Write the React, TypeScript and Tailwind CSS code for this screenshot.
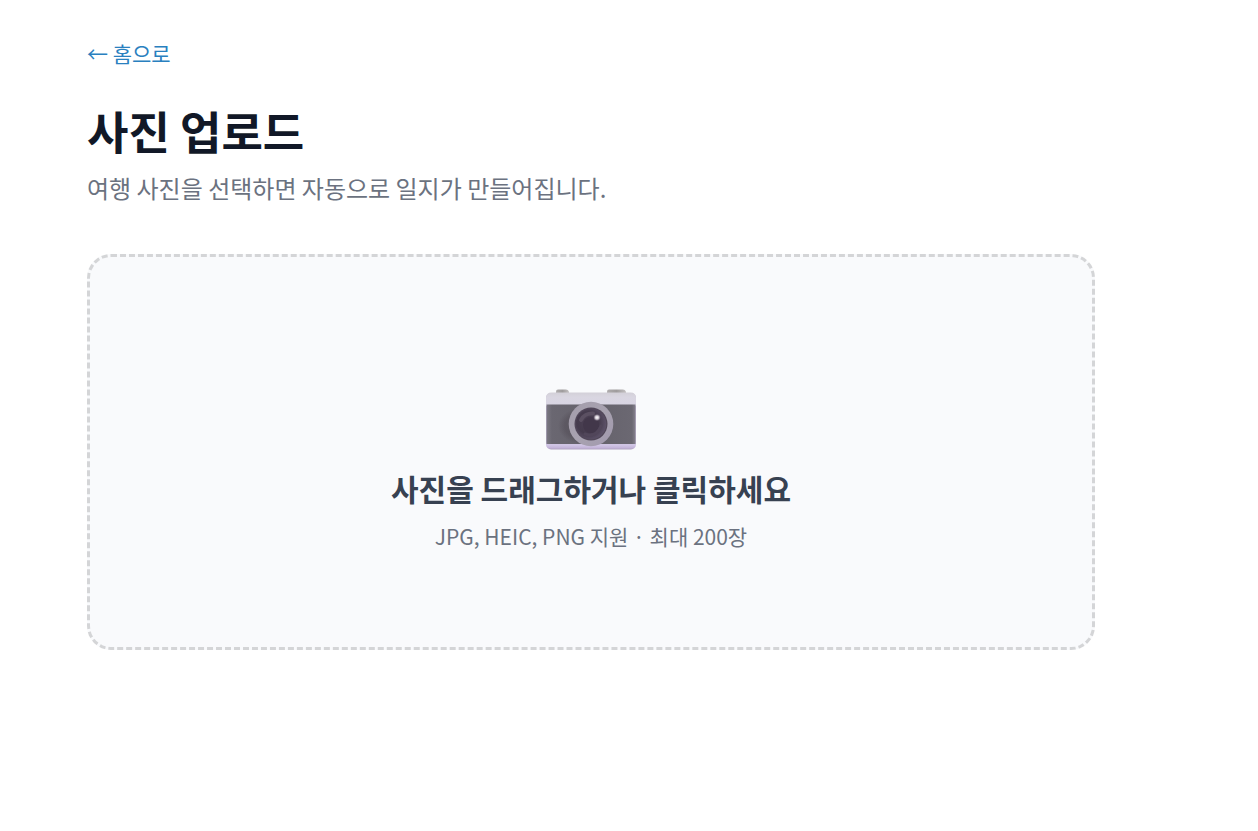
import { useRef } from 'react';

function CameraIcon() {
  return (
    <svg width="92" height="64" viewBox="0 0 92 64" aria-hidden="true">
      <defs>
        <linearGradient id="top" x1="0" y1="0" x2="0" y2="1">
          <stop offset="0" stopColor="#d3d0d8" />
          <stop offset="0.35" stopColor="#d9d6e1" />
          <stop offset="1" stopColor="#d8d4e3" />
        </linearGradient>
        <linearGradient id="base" x1="0" y1="55" x2="0" y2="63" gradientUnits="userSpaceOnUse">
          <stop offset="0" stopColor="#bfb3d0" />
          <stop offset="0.35" stopColor="#d2c7e6" />
          <stop offset="0.7" stopColor="#c4b5da" />
          <stop offset="1" stopColor="#ab9dba" />
        </linearGradient>
        <linearGradient id="body" x1="0" y1="0" x2="1" y2="0">
          <stop offset="0" stopColor="#7c7984" />
          <stop offset="0.06" stopColor="#6a6771" />
          <stop offset="0.5" stopColor="#65626b" />
          <stop offset="0.96" stopColor="#6b6872" />
          <stop offset="1" stopColor="#85818d" />
        </linearGradient>
        <linearGradient id="knob" x1="0" y1="0" x2="1" y2="0">
          <stop offset="0" stopColor="#b0adae" />
          <stop offset="0.5" stopColor="#9f9c9d" />
          <stop offset="1" stopColor="#c3c0c1" />
        </linearGradient>
        <linearGradient id="ring" x1="0" y1="0" x2="1" y2="1">
          <stop offset="0" stopColor="#a39dab" />
          <stop offset="0.5" stopColor="#a8a2b0" />
          <stop offset="1" stopColor="#a199ae" />
        </linearGradient>
        <radialGradient id="lens" cx="0.4" cy="0.45" r="0.6">
          <stop offset="0" stopColor="#4c4154" />
          <stop offset="0.6" stopColor="#453b4d" />
          <stop offset="1" stopColor="#5c5168" />
        </radialGradient>
        <radialGradient id="shade">
          <stop offset="0.7" stopColor="#4e4852" stopOpacity="0.45" />
          <stop offset="1" stopColor="#4e4852" stopOpacity="0" />
        </radialGradient>
        <radialGradient id="glint">
          <stop offset="0" stopColor="#fff" />
          <stop offset="0.5" stopColor="#d6cfd8" />
          <stop offset="1" stopColor="#a298a7" stopOpacity="0.3" />
        </radialGradient>
      </defs>
      <path d="M11 7V4.500Q11 2.500 13 2.500H21Q23 2.500 24 4.500V7Z" fill="url(#knob)" />
      <path d="M62 7V4.500Q62 2.500 64 2.500H78Q80 2.500 81 4.500V7Z" fill="url(#knob)" />
      <rect x="1" y="6" width="90" height="56.500" rx="5" fill="url(#base)" />
      <path d="M1 19V11Q1 5.500 6.500 5.500H85.500Q91 5.500 91 11V19Z" fill="url(#top)" />
      <path d="M1.500 17.500H90.500V57H1.500Z" fill="url(#body)" />
      <ellipse cx="36" cy="39" rx="23" ry="18" fill="url(#shade)" />
      <circle cx="46" cy="37" r="22.300" fill="url(#ring)" />
      <circle cx="46" cy="37" r="16.500" fill="#514759" />
      <circle cx="46" cy="37" r="15.200" fill="url(#lens)" />
      <path d="M36 33A12 11 0 0 1 48 26.500" fill="none" stroke="#5b5062" strokeWidth="4" strokeLinecap="round" />
      <circle cx="46" cy="38" r="8" fill="#42374a" />
      <path d="M40 47Q51 51 56 39" fill="none" stroke="#51465a" strokeWidth="3" strokeLinecap="round" />
      <circle cx="52" cy="30.500" r="3.300" fill="url(#glint)" />
    </svg>
  );
}

export default function App() {
  const fileInput = useRef<HTMLInputElement>(null);

  return (
    <div className="min-h-screen bg-white pt-[38px] pr-[76px] font-['Noto_Sans_CJK_KR','Noto_Sans_KR',sans-serif]">
      <main className="mx-auto max-w-[1008px]">
        <a href="/" className="inline-block text-[21px] leading-[30px] text-[#2980bf]">
          ← 홈으로
        </a>
        <h1 className="mt-9 text-[45px] leading-[54px] font-bold text-[#111827]">사진 업로드</h1>
        <p className="mt-3 text-[24px] leading-[36px] text-[#6b7280]">
          여행 사진을 선택하면 자동으로 일지가 만들어집니다.
        </p>
        <button
          type="button"
          onClick={() => fileInput.current?.click()}
          className="mt-12 flex w-full cursor-pointer flex-col items-center rounded-3xl border-3 border-dashed border-[#d4d5d7] bg-[#f9fafc] px-12 pt-[130px] pb-24"
        >
          <CameraIcon />
          <span className="mt-4 text-[30px] leading-[42px] font-bold text-[#374151]">
            사진을 드래그하거나 클릭하세요
          </span>
          <span className="mt-3 text-[21px] leading-[30px] text-[#6b7280]">
            JPG, HEIC, PNG 지원 · 최대 200장
          </span>
        </button>
        <input
          ref={fileInput}
          type="file"
          accept=".jpg,.jpeg,.heic,.png"
          multiple
          aria-label="사진 선택"
          className="hidden"
        />
      </main>
    </div>
  );
}
